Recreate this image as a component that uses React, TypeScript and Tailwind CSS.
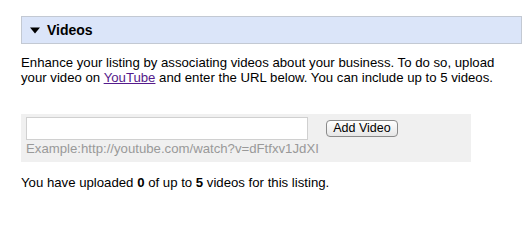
export default function App() {
  return (
    <div className="w-[528px] h-[235px] bg-white pt-4 pl-[21px] font-['Liberation_Sans',Arial,sans-serif] text-[13.2px] text-black">
      <div className="w-[501px] h-[28px] bg-[#dbe5f9] border border-[#c3c9d3] flex items-center pl-[8px]">
        <svg width="10" height="7" viewBox="0 0 10 7" className="mr-[7px]">
          <path d="M0 0.5 H10 L5 6.5 Z" fill="#000" />
        </svg>
        <span className="font-bold text-[14px]">Videos</span>
      </div>
      <p className="mt-[11px] leading-[15px] w-[490px]">
        Enhance your listing by associating videos about your business. To do so, upload your video on{' '}
        <a href="#" className="text-[#551a8b] underline">YouTube</a> and enter the URL below. You can include up to 5 videos.
      </p>
      <div className="mt-[29px] w-[450px] h-[48px] bg-[#f0f0f0] pl-[5px] pt-[3px]">
        <div className="flex items-center">
          <input type="text" className="w-[282px] h-[23px] bg-white border border-[#d0d0d0] outline-none" />
          <button className="ml-[18px] h-[17px] w-[72px] rounded-[4px] border border-[#8a8a8a] bg-gradient-to-b from-white to-[#e6e6e6] text-[12.5px] leading-none flex items-center justify-center">
            Add Video
          </button>
        </div>
        <div className="text-[#999] leading-[15px] mt-[1px]">Example:http://youtube.com/watch?v=dFtfxv1JdXI</div>
      </div>
      <p className="mt-[11px]">
        You have uploaded <b>0</b> of up to <b>5</b> videos for this listing.
      </p>
    </div>
  )
}
